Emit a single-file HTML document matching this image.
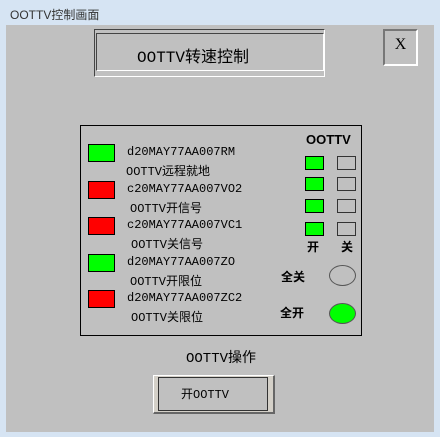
<!DOCTYPE html><html><head><style>
body{margin:0;width:440px;height:437px;background:#d6e4f3;position:relative;overflow:hidden;font-family:"Liberation Serif","Noto Serif CJK SC",serif}
.a{position:absolute}
.t{font-family:"Liberation Sans","Noto Sans CJK SC",sans-serif}
.sq{position:absolute;width:25px;height:16px;border:1px solid #000}
.g{background:#00ff00}.r{background:#ff0000}
.c{font-size:12px;color:#000;position:absolute;white-space:nowrap;font-family:"Liberation Mono","Noto Sans CJK SC",monospace}
.sm{position:absolute;width:17px;height:12px;border:1px solid #333}
</style></head><body>
<div class="a t" style="left:10px;top:6px;font-size:12px;color:#333">OOTTV控制画面</div>
<div class="a" style="left:6px;top:25px;width:428px;height:407px;background:#c0c0c0"></div>
<div class="a" style="left:94px;top:29px;width:229px;height:46px;border:1px solid #444;border-right-color:#fff;border-bottom-color:#fff"></div>
<div class="a" style="left:96px;top:33px;width:226px;height:36px;border:1px solid #444;border-right-color:#fff;border-bottom-color:#fff"></div>
<div class="a" style="left:137px;top:43px;font-size:16px;font-family:'Liberation Mono','Noto Sans CJK SC',monospace">OOTTV转速控制</div>
<div class="a" style="left:383px;top:29px;width:31px;height:33px;border:2px solid #fff;border-left-color:#777;border-top-color:#777"></div>
<div class="a" style="left:385px;top:36px;width:31px;text-align:center;font-size:16px">X</div>
<div class="a" style="left:80px;top:125px;width:280px;height:209px;border:1px solid #000"></div>
<div class="sq g" style="left:88px;top:144px"></div>
<div class="sq r" style="left:88px;top:181px"></div>
<div class="sq r" style="left:88px;top:217px"></div>
<div class="sq g" style="left:88px;top:254px"></div>
<div class="sq r" style="left:88px;top:290px"></div>
<div class="c" style="left:127px;top:145px">d20MAY77AA007RM</div>
<div class="c" style="left:126px;top:162px">OOTTV远程就地</div>
<div class="c" style="left:127px;top:182px">c20MAY77AA007VO2</div>
<div class="c" style="left:130px;top:199px">OOTTV开信号</div>
<div class="c" style="left:127px;top:218px">c20MAY77AA007VC1</div>
<div class="c" style="left:131px;top:235px">OOTTV关信号</div>
<div class="c" style="left:127px;top:255px">d20MAY77AA007ZO</div>
<div class="c" style="left:130px;top:272px">OOTTV开限位</div>
<div class="c" style="left:127px;top:291px">d20MAY77AA007ZC2</div>
<div class="c" style="left:131px;top:308px">OOTTV关限位</div>
<div class="a t" style="left:306px;top:132px;font-size:13px;font-weight:bold">OOTTV</div>
<div class="sm g" style="left:305px;top:156px;border-color:#000"></div><div class="sm" style="left:337px;top:156px"></div>
<div class="sm g" style="left:305px;top:177px;border-color:#000"></div><div class="sm" style="left:337px;top:177px"></div>
<div class="sm g" style="left:305px;top:199px;border-color:#000"></div><div class="sm" style="left:337px;top:199px"></div>
<div class="sm g" style="left:305px;top:222px;border-color:#000"></div><div class="sm" style="left:337px;top:222px"></div>
<div class="a t" style="left:307px;top:238px;font-size:12px;font-weight:bold">开</div>
<div class="a t" style="left:341px;top:238px;font-size:12px;font-weight:bold">关</div>
<div class="a t" style="left:281px;top:268px;font-size:12px;font-weight:bold">全关</div>
<div class="a" style="left:329px;top:265px;width:25px;height:19px;border:1px solid #555;border-radius:50%"></div>
<div class="a t" style="left:280px;top:304px;font-size:12px;font-weight:bold">全开</div>
<div class="a g" style="left:329px;top:303px;width:25px;height:19px;border:1px solid #555;border-radius:50%"></div>
<div class="a" style="left:150px;top:347px;width:142px;text-align:center;font-size:14px;font-family:'Liberation Mono','Noto Sans CJK SC',monospace">OOTTV操作</div>
<div class="a" style="left:153px;top:375px;width:119px;height:36px;border:1px solid #fff;border-right:2px solid #666;border-bottom:2px solid #666;background:#d4d0c8"></div>
<div class="a" style="left:158px;top:377px;width:108px;height:32px;border:1px solid #333;background:#c0c0c0"></div>
<div class="a" style="left:181px;top:385px;font-size:12px;font-family:'Liberation Mono','Noto Sans CJK SC',monospace">开OOTTV</div>
</body></html>
